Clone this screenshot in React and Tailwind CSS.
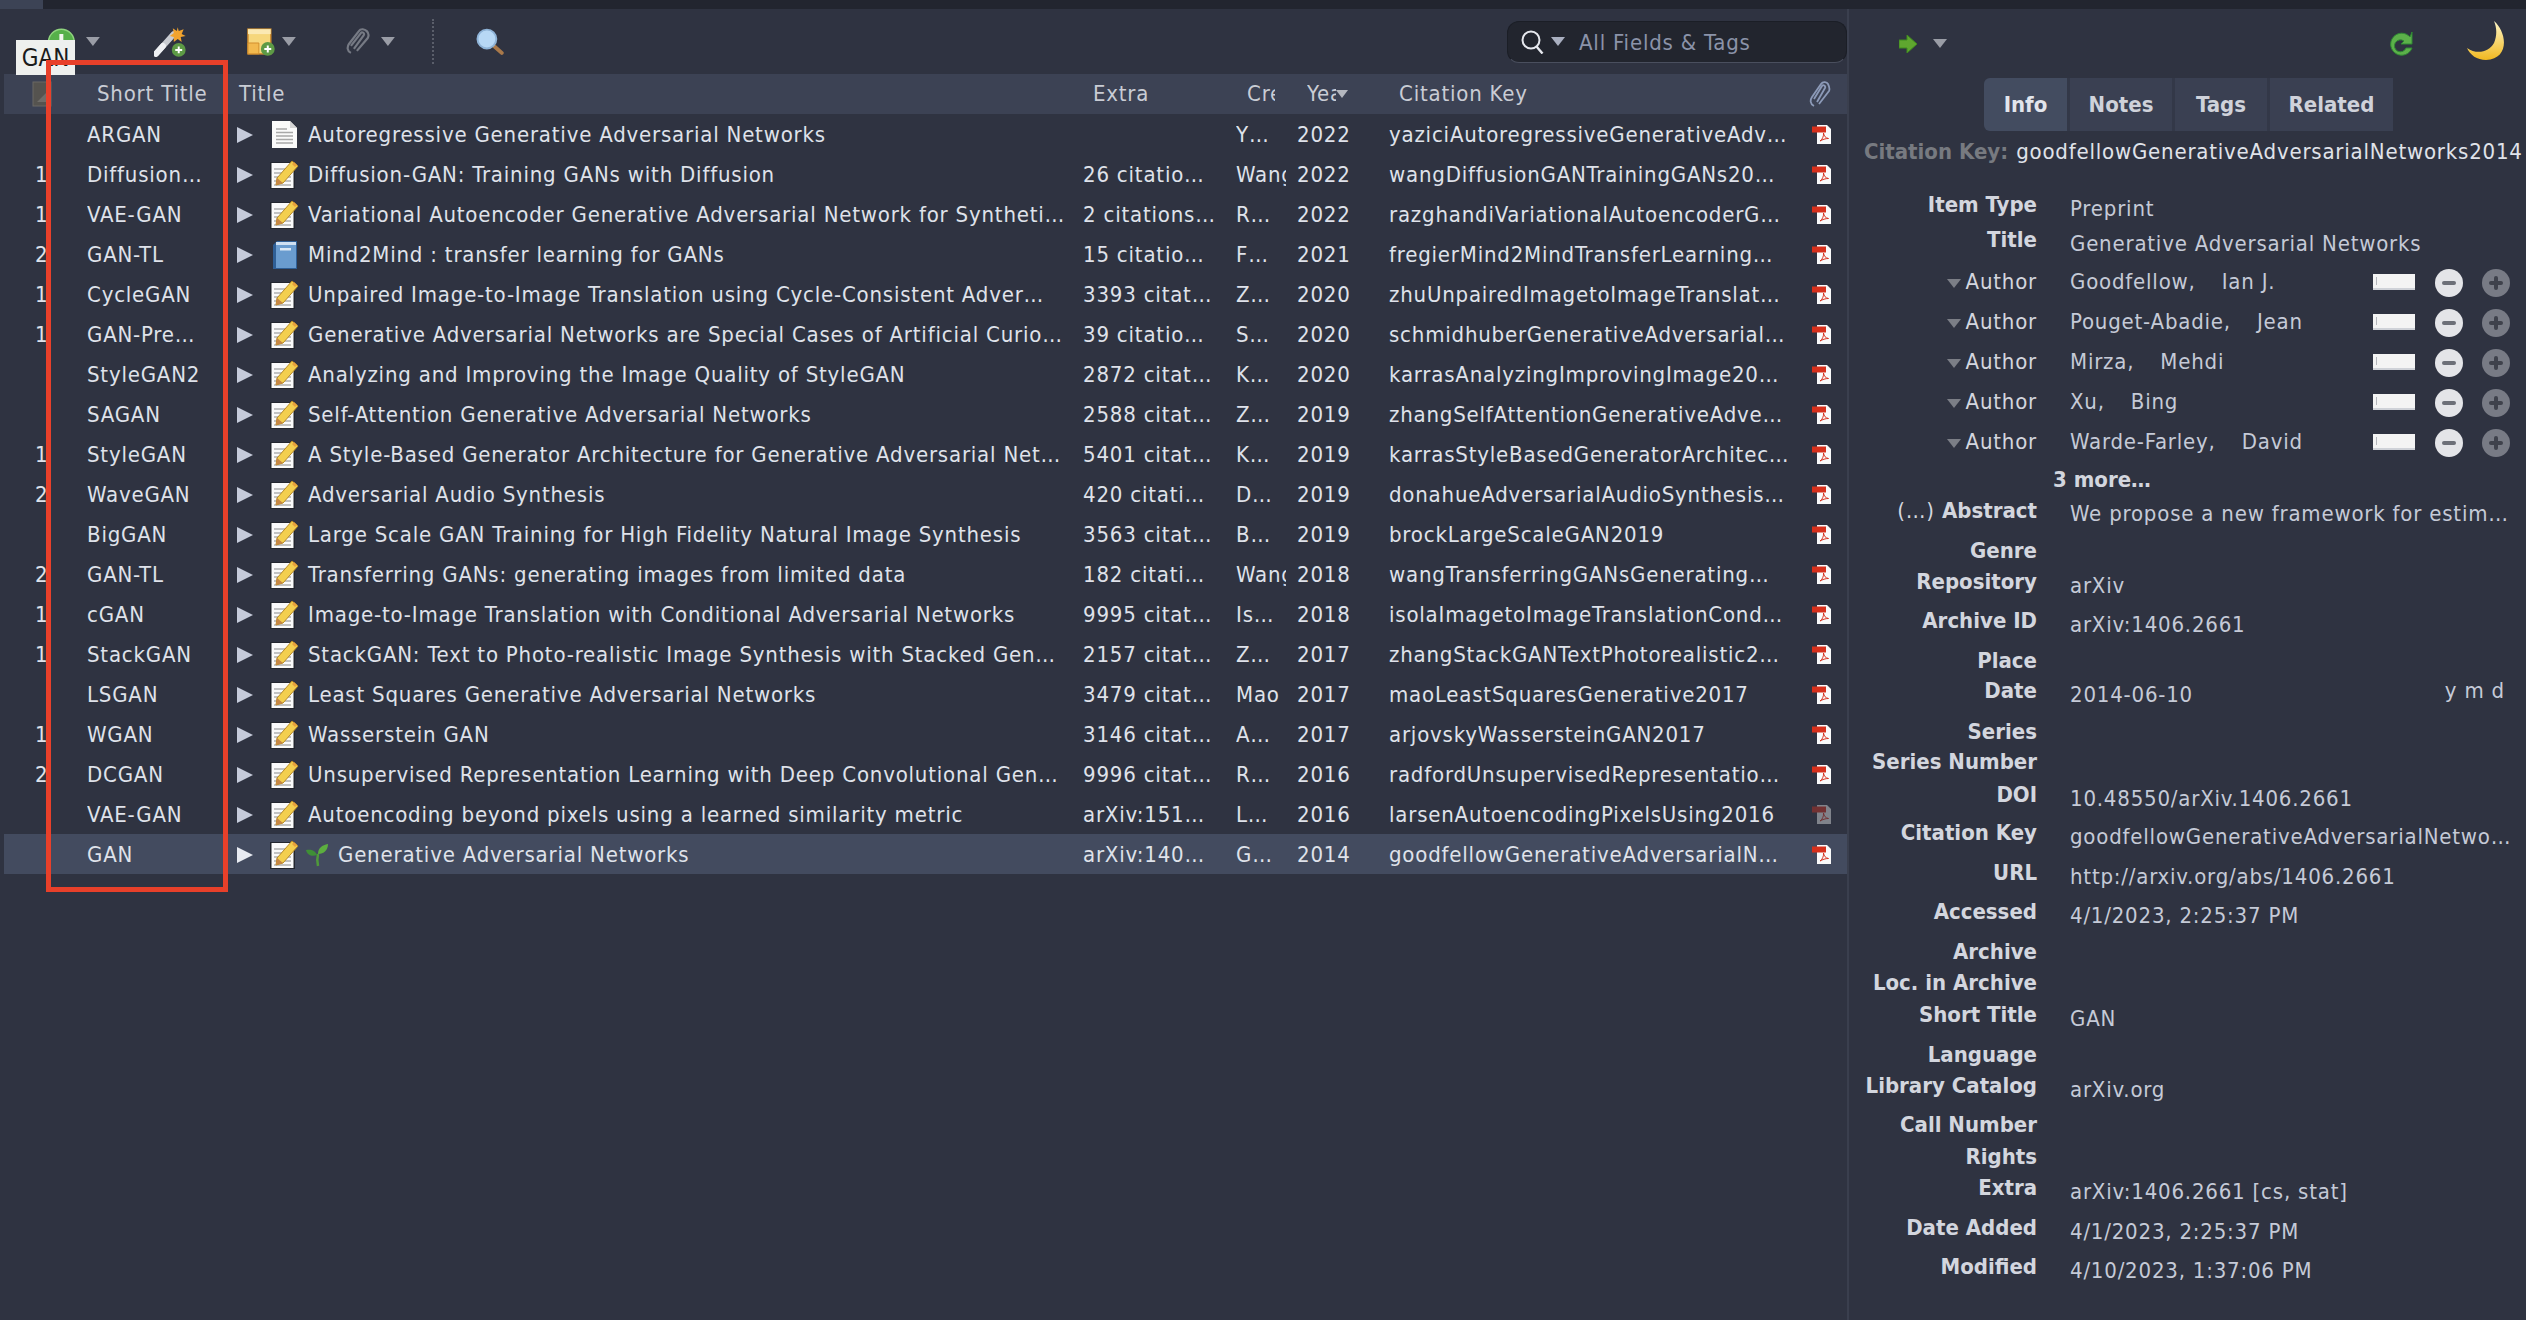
import React from 'react';

const rows = [
  { num: '', short: 'ARGAN', icon: 'doc', title: 'Autoregressive Generative Adversarial Networks', extra: '', creator: 'Y…', year: '2022', citeKey: 'yaziciAutoregressiveGenerativeAdv…' },
  { num: '1', short: 'Diffusion…', icon: 'note', title: 'Diffusion-GAN: Training GANs with Diffusion', extra: '26 citatio…', creator: 'Wang', year: '2022', citeKey: 'wangDiffusionGANTrainingGANs20…' },
  { num: '1', short: 'VAE-GAN', icon: 'note', title: 'Variational Autoencoder Generative Adversarial Network for Syntheti…', extra: '2 citations…', creator: 'R…', year: '2022', citeKey: 'razghandiVariationalAutoencoderG…' },
  { num: '2', short: 'GAN-TL', icon: 'book', title: 'Mind2Mind : transfer learning for GANs', extra: '15 citatio…', creator: 'F…', year: '2021', citeKey: 'fregierMind2MindTransferLearning…' },
  { num: '1', short: 'CycleGAN', icon: 'note', title: 'Unpaired Image-to-Image Translation using Cycle-Consistent Adver…', extra: '3393 citat…', creator: 'Z…', year: '2020', citeKey: 'zhuUnpairedImagetoImageTranslat…' },
  { num: '1', short: 'GAN-Pre…', icon: 'note', title: 'Generative Adversarial Networks are Special Cases of Artificial Curio…', extra: '39 citatio…', creator: 'S…', year: '2020', citeKey: 'schmidhuberGenerativeAdversarial…' },
  { num: '', short: 'StyleGAN2', icon: 'note', title: 'Analyzing and Improving the Image Quality of StyleGAN', extra: '2872 citat…', creator: 'K…', year: '2020', citeKey: 'karrasAnalyzingImprovingImage20…' },
  { num: '', short: 'SAGAN', icon: 'note', title: 'Self-Attention Generative Adversarial Networks', extra: '2588 citat…', creator: 'Z…', year: '2019', citeKey: 'zhangSelfAttentionGenerativeAdve…' },
  { num: '1', short: 'StyleGAN', icon: 'note', title: 'A Style-Based Generator Architecture for Generative Adversarial Net…', extra: '5401 citat…', creator: 'K…', year: '2019', citeKey: 'karrasStyleBasedGeneratorArchitec…' },
  { num: '2', short: 'WaveGAN', icon: 'note', title: 'Adversarial Audio Synthesis', extra: '420 citati…', creator: 'D…', year: '2019', citeKey: 'donahueAdversarialAudioSynthesis…' },
  { num: '', short: 'BigGAN', icon: 'note', title: 'Large Scale GAN Training for High Fidelity Natural Image Synthesis', extra: '3563 citat…', creator: 'B…', year: '2019', citeKey: 'brockLargeScaleGAN2019' },
  { num: '2', short: 'GAN-TL', icon: 'note', title: 'Transferring GANs: generating images from limited data', extra: '182 citati…', creator: 'Wang', year: '2018', citeKey: 'wangTransferringGANsGenerating…' },
  { num: '1', short: 'cGAN', icon: 'note', title: 'Image-to-Image Translation with Conditional Adversarial Networks', extra: '9995 citat…', creator: 'Is…', year: '2018', citeKey: 'isolaImagetoImageTranslationCond…' },
  { num: '1', short: 'StackGAN', icon: 'note', title: 'StackGAN: Text to Photo-realistic Image Synthesis with Stacked Gen…', extra: '2157 citat…', creator: 'Z…', year: '2017', citeKey: 'zhangStackGANTextPhotorealistic2…' },
  { num: '', short: 'LSGAN', icon: 'note', title: 'Least Squares Generative Adversarial Networks', extra: '3479 citat…', creator: 'Mao', year: '2017', citeKey: 'maoLeastSquaresGenerative2017' },
  { num: '1', short: 'WGAN', icon: 'note', title: 'Wasserstein GAN', extra: '3146 citat…', creator: 'A…', year: '2017', citeKey: 'arjovskyWassersteinGAN2017' },
  { num: '2', short: 'DCGAN', icon: 'note', title: 'Unsupervised Representation Learning with Deep Convolutional Gen…', extra: '9996 citat…', creator: 'R…', year: '2016', citeKey: 'radfordUnsupervisedRepresentatio…' },
  { num: '', short: 'VAE-GAN', icon: 'note', title: 'Autoencoding beyond pixels using a learned similarity metric', extra: 'arXiv:151…', creator: 'L…', year: '2016', citeKey: 'larsenAutoencodingPixelsUsing2016', dimPdf: true },
  { num: '', short: 'GAN', icon: 'note', title: 'Generative Adversarial Networks', extra: 'arXiv:140…', creator: 'G…', year: '2014', citeKey: 'goodfellowGenerativeAdversarialN…', selected: true },
];

// label, value, row height
const fieldsTop = [
  ['Item Type', 'Preprint', 35],
  ['Title', 'Generative Adversarial Networks', 42],
];
const authors = [
  ['Goodfellow', 'Ian J.', 40],
  ['Pouget-Abadie', 'Jean', 40],
  ['Mirza', 'Mehdi', 40],
  ['Xu', 'Bing', 40],
  ['Warde-Farley', 'David', 38],
];
const fieldsBottom = [
  ['Genre', '', 31],
  ['Repository', 'arXiv', 39],
  ['Archive ID', 'arXiv:1406.2661', 40],
  ['Place', '', 30],
  ['Date', '2014-06-10', 41],
  ['Series', '', 30],
  ['Series Number', '', 33],
  ['DOI', '10.48550/arXiv.1406.2661', 38],
  ['Citation Key', 'goodfellowGenerativeAdversarialNetwo…', 40],
  ['URL', 'http://arxiv.org/abs/1406.2661', 39],
  ['Accessed', '4/1/2023, 2:25:37 PM', 40],
  ['Archive', '', 31],
  ['Loc. in Archive', '', 32],
  ['Short Title', 'GAN', 40],
  ['Language', '', 31],
  ['Library Catalog', 'arXiv.org', 39],
  ['Call Number', '', 32],
  ['Rights', '', 31],
  ['Extra', 'arXiv:1406.2661 [cs, stat]', 40],
  ['Date Added', '4/1/2023, 2:25:37 PM', 39],
  ['Modified', '4/10/2023, 1:37:06 PM', 40],
];

const Caret = ({ className = '' }) => (
  <svg width="14" height="9" viewBox="0 0 14 9" className={className}>
    <path d="M0 0h14L7 9z" fill="#9a9da6" />
  </svg>
);

const DocIcon = () => (
  <svg width="27" height="29" viewBox="0 0 27 29">
    <path d="M1 1h18l7 7v20H1z" fill="#fafafa" />
    <path d="M19 1v7h7z" fill="#d5d5d5" />
    <path d="M5 9h11M5 12.500h17M5 16h17M5 19.500h17M5 23h17" stroke="#a8a8a8" strokeWidth="1.600" />
  </svg>
);

const NoteIcon = () => (
  <svg width="29" height="29" viewBox="0 0 29 29">
    <rect x="0" y="2" width="25" height="27" fill="#23262f" />
    <rect x="1.500" y="3" width="22" height="25" fill="#fafafa" />
    <path d="M4 9h17M4 13h17M4 17h17M4 21h17M4 25h17" stroke="#b0b0b0" strokeWidth="1.600" />
    <path d="M22 1l6 5-15 17-7 2 1-7z" fill="#f3cf4f" stroke="#b98a25" strokeWidth="1" />
    <path d="M24 2l3 3-2 2-3-3z" fill="#e8a13c" />
    <path d="M7 18l6 5-7 2z" fill="#c68645" />
  </svg>
);

const BookIcon = () => (
  <svg width="26" height="30" viewBox="0 0 26 30">
    <path d="M1 5l4-4h20v28H1z" fill="#2f5f96" />
    <rect x="4" y="5" width="20" height="23" fill="#6a9ccf" />
    <rect x="4" y="2" width="20" height="3" fill="#cfe0f2" />
    <rect x="8" y="8" width="11" height="2.500" fill="#dbe8f5" />
  </svg>
);

const PdfIcon = ({ dim }) => (
  <svg width="19" height="19" viewBox="0 0 19 19" className={dim ? 'opacity-40' : ''}>
    <path d="M5 0h10l4 4v15H5z" fill="#fafafa" />
    <rect x="0" y="1.500" width="14" height="6" fill="#d6301c" />
    <path d="M8 16c2-1 4-5 3.500-8 .5 3 2 5 5 5.500-3 0-6 1-8.500 2.500z" fill="none" stroke="#d6301c" strokeWidth="1" />
  </svg>
);

const Sprout = () => (
  <svg width="24" height="24" viewBox="0 0 24 24">
    <path d="M13 23c-1-5-1-8 0-12" stroke="#4f9a3a" strokeWidth="2.500" fill="none" />
    <path d="M13 11c0-6 4-9 10-10 0 6-4 10-10 10z" fill="#5cae3f" />
    <path d="M12 12C10 7 6 6 1 7c1 5 6 7 11 5z" fill="#3f8f36" />
  </svg>
);

const ItemIcon = ({ type }) => {
  if (type === 'doc') return <DocIcon />;
  if (type === 'book') return <BookIcon />;
  return <NoteIcon />;
};

const AddBadge = ({ x, y }) => (
  <g>
    <circle cx={x} cy={y} r="7" fill="#5d9a45" />
    <path d={`M${x - 3.500} ${y}h7M${x} ${y - 3.500}v7`} stroke="#fff" strokeWidth="2" />
  </g>
);

const Toolbar = () => (
  <div className="flex h-[65px] shrink-0 items-center">
    <svg width="27" height="28" viewBox="0 0 27 28" className="ml-[48px] mt-[19px] self-start">
      <circle cx="13.500" cy="14" r="13" fill="#56b04a" stroke="#8fd47e" strokeWidth="1.500" />
      <path d="M13.500 6v16M5.500 14h16" stroke="#f2f6ef" strokeWidth="4" />
    </svg>
    <Caret className="ml-[11px]" />
    <svg width="33" height="31" viewBox="0 0 33 31" className="ml-[54px]">
      <path d="M2 28L20 8" stroke="#c9ccd2" strokeWidth="6" strokeLinecap="round" />
      <path d="M2 28L9 20" stroke="#eef0f3" strokeWidth="6" strokeLinecap="round" />
      <path d="M24 1l1 4 5-2-2 5 4 2-5 1 1 5-4-3-4 3 0-5-4-1 4-3-1-5 4 3z" fill="#f1a32e" />
      <AddBadge x={25} y={24} />
    </svg>
    <svg width="28" height="28" viewBox="0 0 28 28" className="ml-[61px]">
      <rect x="1" y="1" width="23" height="25" fill="#f6d77c" stroke="#d28f2f" strokeWidth="1.500" />
      <rect x="1" y="1" width="23" height="5" fill="#fbe9b3" />
      <path d="M1 26V15h11v11z" fill="#f2b94e" stroke="#d28f2f" />
      <AddBadge x={21} y={21} />
    </svg>
    <Caret className="ml-[7px]" />
    <svg width="26" height="27" viewBox="0 0 26 27" className="ml-[49px]">
      <path d="M6 25c-4-2-4-6-2-9L14 3c2-3 6-2 8 0s2 5 1 7L12 23M9 21L19 7c1-2-2-4-3-2L6 18" fill="none" stroke="#767a84" strokeWidth="2.200" />
    </svg>
    <Caret className="ml-[11px]" />
    <div className="ml-[37px] h-[45px] border-l-2 border-dotted border-[#5a5e6a]" />
    <svg width="28" height="27" viewBox="0 0 28 27" className="ml-[42px]">
      <path d="M17 17l9 8" stroke="#a9794a" strokeWidth="4" strokeLinecap="round" />
      <circle cx="11" cy="11" r="9.500" fill="#b7d8f5" stroke="#8fb4d8" strokeWidth="2" />
    </svg>
    <div className="ml-[1003px] flex h-[42px] w-[340px] shrink-0 items-center rounded-[12px] border border-[#1b1e26] border-b-[#4a4f5e] bg-[#22252e]">
      <svg width="26" height="24" viewBox="0 0 26 24" className="ml-[12px]">
        <circle cx="11" cy="10" r="8.500" fill="none" stroke="#e6e8ee" strokeWidth="2" />
        <path d="M16.500 16.500l6 7" stroke="#e6e8ee" strokeWidth="2.400" />
      </svg>
      <svg width="14" height="9" viewBox="0 0 14 9" className="ml-[5px]">
        <path d="M0 0h14L7 9z" fill="#a9afc0" />
      </svg>
      <span className="ml-[14px] mt-[2px] text-[#8b93a9]">All Fields &amp; Tags</span>
    </div>
  </div>
);

const TableHeader = () => (
  <div className="flex h-[40px] items-center bg-[#3c4254] text-[#c9ccd4]">
    <div className="w-[83px] pl-[28px]">
      <svg width="20" height="26" viewBox="0 0 20 26">
        <rect x="1" y="1" width="18" height="24" fill="#55534f" stroke="#6a6864" />
        <path d="M5 21l9-9v9z" fill="#6f6d69" />
      </svg>
    </div>
    <div className="w-[150px] pl-[10px]">Short Title</div>
    <div className="w-[846px] pl-[2px]">Title</div>
    <div className="w-[153px] pl-[10px]">Extra</div>
    <div className="w-[61px] pl-[11px]"><div className="w-[28px] overflow-hidden">Creator</div></div>
    <div className="flex w-[92px] items-center pl-[10px]">
      <div className="w-[29px] overflow-hidden">Year</div>
      <svg width="12" height="8" viewBox="0 0 12 8"><path d="M0 0h12L6 8z" fill="#b4b7bf" /></svg>
    </div>
    <div className="w-[420px] pl-[10px]">Citation Key</div>
    <svg width="23" height="27" viewBox="0 0 23 27">
      <path d="M5 25c-4-2-4-6-2-9L12 3c2-3 6-2 7 0s2 5 1 7L10 23M8 21L16 7c1-2-2-4-3-2L5 18" fill="none" stroke="#8c9ab8" strokeWidth="1.800" />
    </svg>
  </div>
);

const TableRow = ({ row }) => (
  <div className={`flex h-[40px] items-center pt-[1px] text-[#dfe2ea] ${row.selected ? 'bg-[#434b5f]' : ''}`}>
    <div className="w-[83px] pl-[31px]">{row.num}</div>
    <div className="w-[150px] truncate">{row.short}</div>
    <div className="flex w-[846px] items-center">
      <svg width="16" height="16" viewBox="0 0 16 16">
        <path d="M0 0l16 8-16 8z" fill={row.selected ? '#e8ebf2' : '#c6cbda'} />
      </svg>
      <div className="ml-[17px] flex w-[29px] justify-center"><ItemIcon type={row.icon} /></div>
      {row.selected && <div className="ml-[6px]"><Sprout /></div>}
      <span className="ml-[9px] whitespace-nowrap">{row.title}</span>
    </div>
    <div className="w-[153px] whitespace-nowrap">{row.extra}</div>
    <div className="w-[61px]"><div className="w-[50px] overflow-hidden whitespace-nowrap">{row.creator}</div></div>
    <div className="w-[92px]">{row.year}</div>
    <div className="w-[423px] whitespace-nowrap">{row.citeKey}</div>
    <PdfIcon dim={row.dimPdf} />
  </div>
);

const Field = ({ label, value, height }) => (
  <div className="flex" style={{ height }}>
    <div className="w-[188px] shrink-0 whitespace-nowrap text-right font-bold tracking-normal text-[#d3d6de]">{label}</div>
    <div className="ml-[33px] mt-[4px] whitespace-nowrap text-[#c5cad7]">{value}</div>
  </div>
);

const AuthorRow = ({ last, first, height }) => (
  <div className="flex" style={{ height }}>
    <div className="flex w-[188px] shrink-0 items-start justify-end">
      <svg width="14" height="9" viewBox="0 0 14 9" className="mr-[5px] mt-[10px]"><path d="M0 0h14L7 9z" fill="#7b7e86" /></svg>
      <span className="text-[#d3d6de]">Author</span>
    </div>
    <div className="ml-[33px] flex w-[303px] shrink-0 text-[#c5cad7]">
      <span>{last},</span>
      <span className="ml-[26px]">{first}</span>
    </div>
    <div className="mt-[5px] flex h-[16px] w-[42px] shrink-0 items-center border-b-2 border-[#cfd2d8] bg-[#f4f4f4] pl-[3px]">
      <div className="h-[8px] w-[1px] bg-[#b5b7bc]" />
    </div>
    <div className="ml-[20px] flex h-[28px] w-[28px] shrink-0 items-center justify-center rounded-full bg-[#e4e5e8]">
      <div className="h-[4px] w-[14px] rounded-sm bg-[#6d7078]" />
    </div>
    <div className="relative ml-[19px] flex h-[28px] w-[28px] shrink-0 items-center justify-center rounded-full bg-[#787b85]">
      <div className="h-[4px] w-[14px] rounded-sm bg-[#3f424c]" />
      <div className="absolute h-[14px] w-[4px] rounded-sm bg-[#3f424c]" />
    </div>
  </div>
);

const InfoPane = () => (
  <div className="flex min-w-0 flex-1 flex-col">
    <div className="flex h-[69px] shrink-0 items-center">
      <svg width="18" height="18" viewBox="0 0 18 18" className="ml-[50px]">
        <path d="M0 5h8V0l10 9-10 9v-5H0z" fill="#5fa62f" stroke="#3f8a1f" strokeWidth="1" />
      </svg>
      <Caret className="ml-[16px]" />
      <svg width="24" height="27" viewBox="0 0 24 27" className="ml-[443px]">
        <path d="M20 7a11 11 0 1 0 2 11h-6a6 6 0 1 1-2-7l-3 3h11V2z" fill="#5cb04a" stroke="#2f8a33" strokeWidth="1" />
      </svg>
      <svg width="40" height="40" viewBox="0 0 40 40" className="ml-[53px] -mt-[6px]">
        <defs>
          <linearGradient id="moon" x1="0" y1="0" x2="0" y2="1">
            <stop offset="0" stopColor="#fff7c8" />
            <stop offset="1" stopColor="#f0b820" />
          </linearGradient>
        </defs>
        <path d="M27 0c13 11 16 38-8 39C10 39 3 34 0 27c10 7 22 4 27-5 3-7 3-15 0-22z" fill="url(#moon)" />
      </svg>
    </div>
    <div className="ml-[135px] flex h-[53px] w-[409px] shrink-0 gap-[3px] rounded-l-[6px] bg-[#333848] font-bold tracking-normal text-[#cfd2da]">
      <div className="flex w-[83px] items-center justify-center rounded-l-[6px] bg-[#434c60] text-[#e2e5ec]">Info</div>
      <div className="flex w-[102px] items-center justify-center bg-[#3a4052]">Notes</div>
      <div className="flex w-[92px] items-center justify-center bg-[#3a4052]">Tags</div>
      <div className="flex w-[123px] items-center justify-center bg-[#3a4052]">Related</div>
    </div>
    <div className="ml-[15px] mt-[8px] flex h-[53px] shrink-0 whitespace-nowrap">
      <span className="font-bold tracking-normal text-[#777a80]">Citation Key:</span>
      <span className="ml-[8px] text-[#e0e3ea]">goodfellowGenerativeAdversarialNetworks2014</span>
    </div>
    <div className="flex flex-col">
      {fieldsTop.map(([label, value, h]) => <Field key={label} label={label} value={value} height={h} />)}
      {authors.map(([last, first, h]) => <AuthorRow key={last} last={last} first={first} height={h} />)}
      <div className="ml-[204px] h-[31px] font-bold tracking-normal text-[#d3d6de]">3 more…</div>
      <div className="flex h-[40px]">
        <div className="w-[188px] shrink-0 whitespace-nowrap text-right text-[#d3d6de]">(…) <span className="font-bold tracking-normal">Abstract</span></div>
        <div className="ml-[33px] mt-[3px] whitespace-nowrap text-[#c5cad7]">We propose a new framework for estim…</div>
      </div>
      {fieldsBottom.map(([label, value, h]) => (
        label === 'Date'
          ? <div key={label} className="relative"><Field label={label} value={value} height={h} /><span className="absolute right-[21px] top-0 text-[#c5cad7]">y m d</span></div>
          : <Field key={label} label={label} value={value} height={h} />
      ))}
    </div>
  </div>
);

const App = () => {
  return (
    <div className="relative flex h-screen flex-col overflow-hidden bg-[#2f3341] font-['DejaVu_Sans_Condensed','DejaVu_Sans',sans-serif] text-[22px] leading-[26px] tracking-[0.8px]">
      <div className="flex h-[9px] shrink-0 bg-[#22252f]">
        <div className="w-[43px] bg-[#3c4355]" />
      </div>
      <div className="flex min-h-0 flex-1">
        <div className="flex w-[1847px] shrink-0 flex-col">
          <Toolbar />
          <div className="flex flex-1 pl-[4px]">
            <div className="flex-1">
              <TableHeader />
              {rows.map(row => <TableRow key={row.citeKey} row={row} />)}
            </div>
          </div>
        </div>
        <div className="w-[2px] shrink-0 bg-[#3a3f4e]" />
        <InfoPane />
      </div>
      {/* tooltip + annotation box sit over the table */}
      <div className="absolute left-[16px] top-[40px] flex h-[35px] w-[59px] items-center justify-center bg-[#eef0ee] text-[24px] tracking-normal text-[#1b1b1b]">GAN</div>
      <div className="absolute left-[46px] top-[60px] h-[832px] w-[182px] border-[5px] border-[#e8402a]" />
    </div>
  );
};

export default App;
